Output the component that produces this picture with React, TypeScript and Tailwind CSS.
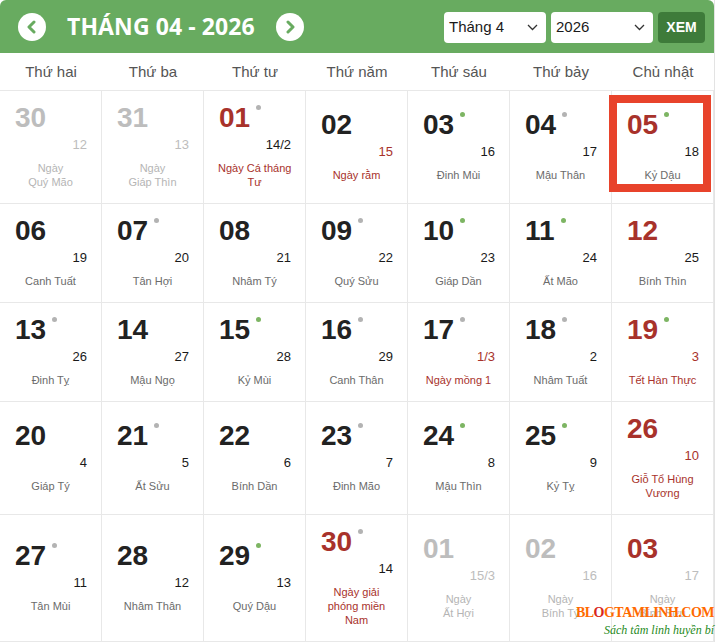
import React from "react";

type Cell = {
  d: string;
  lunar: string;
  label: string[];
  dot?: "g" | "x";
  red?: boolean;
  lunarRed?: boolean;
  labelRed?: boolean;
  other?: boolean;
  today?: boolean;
};

const rows: Cell[][] = [
  [
    { d: "30", lunar: "12", label: ["Ngày", "Quý Mão"], other: true },
    { d: "31", lunar: "13", label: ["Ngày", "Giáp Thìn"], other: true },
    { d: "01", lunar: "14/2", label: ["Ngày Cá tháng", "Tư"], dot: "x", red: true, labelRed: true },
    { d: "02", lunar: "15", label: ["Ngày rằm"], lunarRed: true, labelRed: true },
    { d: "03", lunar: "16", label: ["Đinh Mùi"], dot: "g" },
    { d: "04", lunar: "17", label: ["Mậu Thân"], dot: "x" },
    { d: "05", lunar: "18", label: ["Kỷ Dậu"], dot: "g", red: true, today: true },
  ],
  [
    { d: "06", lunar: "19", label: ["Canh Tuất"] },
    { d: "07", lunar: "20", label: ["Tân Hợi"], dot: "x" },
    { d: "08", lunar: "21", label: ["Nhâm Tý"] },
    { d: "09", lunar: "22", label: ["Quý Sửu"], dot: "x" },
    { d: "10", lunar: "23", label: ["Giáp Dần"], dot: "g" },
    { d: "11", lunar: "24", label: ["Ất Mão"], dot: "g" },
    { d: "12", lunar: "25", label: ["Bính Thìn"], red: true },
  ],
  [
    { d: "13", lunar: "26", label: ["Đinh Tỵ"], dot: "x" },
    { d: "14", lunar: "27", label: ["Mậu Ngọ"] },
    { d: "15", lunar: "28", label: ["Kỷ Mùi"], dot: "g" },
    { d: "16", lunar: "29", label: ["Canh Thân"], dot: "x" },
    { d: "17", lunar: "1/3", label: ["Ngày mồng 1"], dot: "x", lunarRed: true, labelRed: true },
    { d: "18", lunar: "2", label: ["Nhâm Tuất"], dot: "x" },
    { d: "19", lunar: "3", label: ["Tết Hàn Thực"], dot: "g", red: true, lunarRed: true, labelRed: true },
  ],
  [
    { d: "20", lunar: "4", label: ["Giáp Tý"] },
    { d: "21", lunar: "5", label: ["Ất Sửu"], dot: "x" },
    { d: "22", lunar: "6", label: ["Bính Dần"] },
    { d: "23", lunar: "7", label: ["Đinh Mão"], dot: "x" },
    { d: "24", lunar: "8", label: ["Mậu Thìn"], dot: "g" },
    { d: "25", lunar: "9", label: ["Kỷ Tỵ"], dot: "g" },
    { d: "26", lunar: "10", label: ["Giỗ Tổ Hùng", "Vương"], red: true, lunarRed: true, labelRed: true },
  ],
  [
    { d: "27", lunar: "11", label: ["Tân Mùi"], dot: "x" },
    { d: "28", lunar: "12", label: ["Nhâm Thân"] },
    { d: "29", lunar: "13", label: ["Quý Dậu"], dot: "g" },
    { d: "30", lunar: "14", label: ["Ngày giải", "phóng miền", "Nam"], dot: "x", red: true, labelRed: true },
    { d: "01", lunar: "15/3", label: ["Ngày", "Ất Hợi"], other: true },
    { d: "02", lunar: "16", label: ["Ngày", "Bính Tý"], other: true },
    { d: "03", lunar: "17", label: ["Ngày", "Bính Sửu"], other: true, red: true },
  ],
];

const days = ["Thứ hai", "Thứ ba", "Thứ tư", "Thứ năm", "Thứ sáu", "Thứ bảy", "Chủ nhật"];

function DayCell({ c }: { c: Cell }) {
  const numColor = c.red ? "text-[#a8322b]" : c.other ? "text-[#bdbdbd]" : "text-[#222222]";
  const lunarColor = c.other ? "text-[#bdbdbd]" : c.lunarRed ? "text-[#a8322b]" : "text-[#1a1a1a]";
  const labelColor = c.other ? "text-[#b5b5b5]" : c.labelRed ? "text-[#a8322b]" : "text-[#6b6b6b]";
  return (
    <div className="relative flex flex-col justify-center border-b border-r border-[#e8e8e8] pt-[12px] pb-[14px] px-[14px]">
      {c.today && (
        <div className="absolute top-[4px] left-[-3px] right-[2px] bottom-[11px] border-[8px] border-[#e8432b]" />
      )}
      <div className="relative flex items-start h-[30px] pl-[1px]">
        <span className={`text-[28px] leading-[30px] font-bold ${numColor}`}>{c.d}</span>
        {c.dot && (
          <span
            className={`ml-[6px] mt-[2px] w-[5px] h-[5px] rounded-full ${
              c.dot === "g" ? "bg-[#7db563]" : "bg-[#b3b3b3]"
            }`}
          />
        )}
      </div>
      <div className={`relative text-right text-[13px] leading-[16px] mt-[4px] ${lunarColor}`}>{c.lunar}</div>
      <div className={`relative text-center text-[11px] leading-[14px] mt-[8px] whitespace-nowrap ${labelColor}`}>
        {c.label.map((l, i) => (
          <div key={i}>{l}</div>
        ))}
      </div>
    </div>
  );
}

function Chevron({ dir }: { dir: "l" | "r" }) {
  return (
    <svg width="12" height="14" viewBox="0 0 12 14">
      <path
        d={dir === "l" ? "M8 2 L3 7 L8 12" : "M4 2 L9 7 L4 12"}
        fill="none"
        stroke="#68ab60"
        strokeWidth="3"
        strokeLinecap="round"
        strokeLinejoin="round"
      />
    </svg>
  );
}

function SelectBox({ text }: { text: string }) {
  return (
    <div className="w-[102px] h-[31px] bg-white rounded-[4px] flex items-center justify-between pl-[5px] pr-[8px] text-[15px] text-[#1a1a1a]">
      <span>{text}</span>
      <svg width="11" height="7" viewBox="0 0 11 7">
        <path d="M1 1 L5.5 5.5 L10 1" fill="none" stroke="#333" strokeWidth="1.3" />
      </svg>
    </div>
  );
}

export default function App() {
  return (
    <div className="relative w-[720px] h-[643px] bg-white overflow-hidden" style={{ fontFamily: '"Liberation Sans", Arial, sans-serif' }}>
      <div className="w-[715px] border-r border-[#e3e3e3]">
        <div className="h-[53px] bg-[#68ab60] rounded-t-[6px] flex items-center pl-[18px] pr-[9px]">
          <div className="w-[28px] h-[28px] rounded-full bg-white flex items-center justify-center">
            <Chevron dir="l" />
          </div>
          <div
            className="ml-[21px] mr-[21px] text-white text-[23px] font-bold tracking-[0.1px]"
            style={{ fontFamily: '"Open Sans", sans-serif' }}
          >
            THÁNG 04 - 2026
          </div>
          <div className="w-[28px] h-[28px] rounded-full bg-white flex items-center justify-center">
            <Chevron dir="r" />
          </div>
          <div className="ml-auto flex items-center gap-[5px] pt-[1px]">
            <SelectBox text="Tháng 4" />
            <SelectBox text="2026" />
            <div className="w-[47px] h-[31px] rounded-[4px] bg-[#3e7b3a] text-white font-bold text-[14px] flex items-center justify-center">
              XEM
            </div>
          </div>
        </div>
        <div className="grid grid-cols-7 h-[38px] pt-[2px] border-b border-[#e8e8e8]">
          {days.map((d) => (
            <div key={d} className="flex items-center justify-center text-[15px] text-[#555555]">
              {d}
            </div>
          ))}
        </div>
        {rows.map((r, i) => (
          <div key={i} className="grid grid-cols-7">
            {r.map((c, j) => (
              <DayCell key={j} c={c} />
            ))}
          </div>
        ))}
      </div>
      <div className="absolute right-[6px] bottom-[7px] flex flex-col items-end leading-none">
        <div
          className="text-[14px] font-bold tracking-[-0.5px] text-[#ff6a00]"
          style={{ fontFamily: '"Liberation Serif", "Times New Roman", serif' }}
        >
          BL<span className="text-[#d8261c]">O</span>GTAMLINH.COM
        </div>
        <div
          className="mt-[4px] text-[12px] italic text-[#1f8a22]"
          style={{ fontFamily: '"Liberation Serif", "Times New Roman", serif' }}
        >
          Sách tâm linh huyền bí
        </div>
      </div>
    </div>
  );
}
